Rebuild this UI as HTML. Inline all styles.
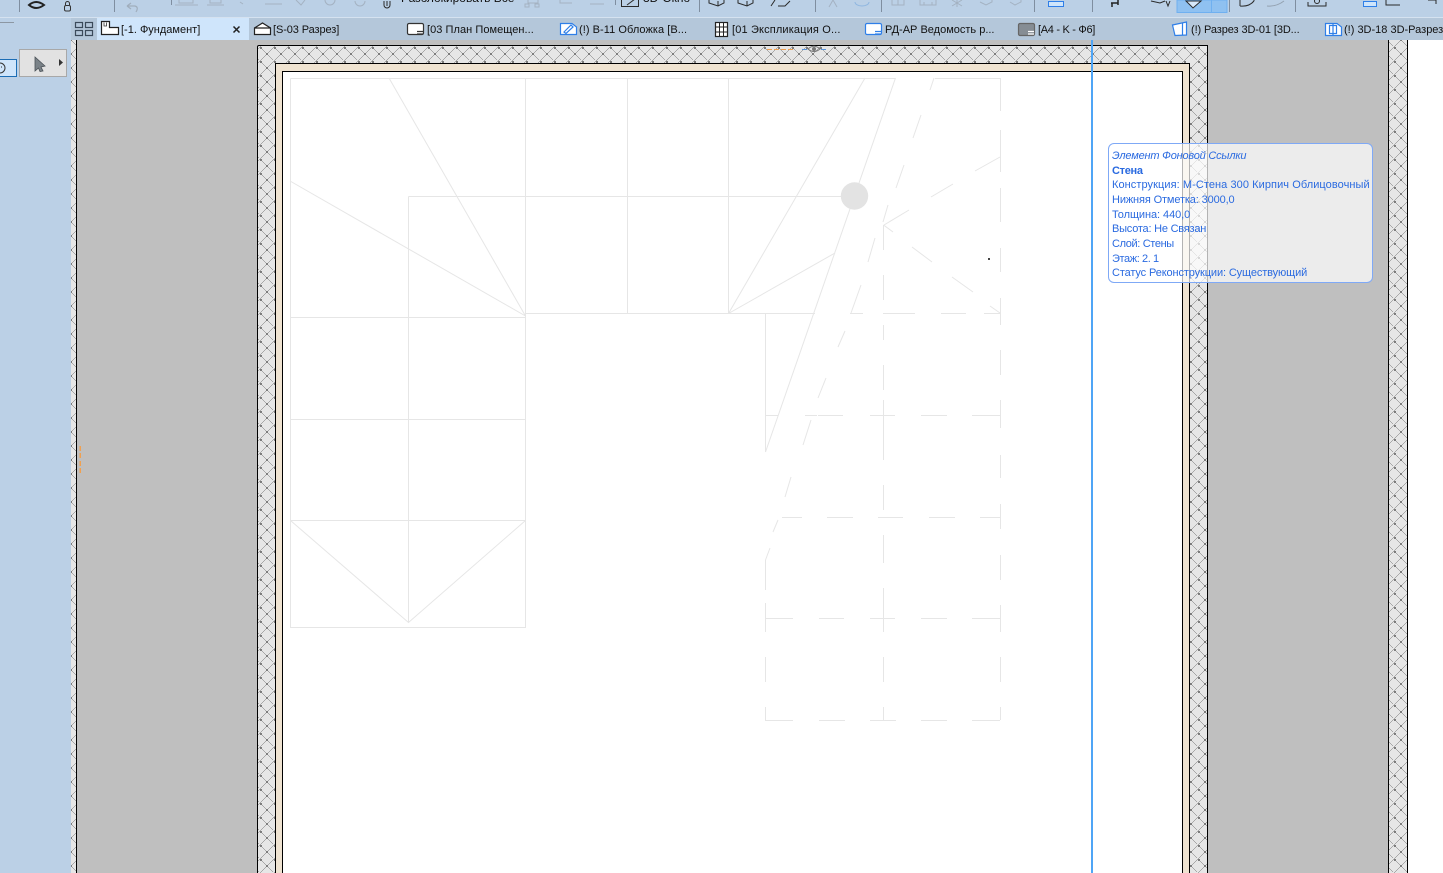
<!DOCTYPE html>
<html lang="ru">
<head>
<meta charset="utf-8">
<title>Фундамент</title>
<style>
html,body{margin:0;padding:0;background:#fff}
body{position:relative;width:1443px;height:873px;overflow:hidden;font-family:"Liberation Sans","Noto Sans CJK SC",sans-serif}
svg.bg{position:absolute;left:0;top:0}
.t{position:absolute;top:23px;font-size:11px;line-height:14px;color:#111;white-space:nowrap}
.tb{position:absolute;top:-8px;font-size:12px;line-height:12px;color:#111;white-space:nowrap}
#tip{position:absolute;left:1108px;top:143px;width:263px;height:138px;border:1px solid #7fa9f6;border-radius:6px;background:rgba(255,255,255,.7);color:#2a6ae0;font-size:11px}
#tip div{position:absolute;left:3px;white-space:nowrap;line-height:14px}
</style>
</head>
<body>
<svg class="bg" width="1443" height="873" viewBox="0 0 1443 873" xmlns="http://www.w3.org/2000/svg">
<defs>
<pattern id="h" width="14" height="14" patternUnits="userSpaceOnUse" x="260" y="47">
<rect width="14" height="14" fill="#e6e6e6"/>
<g fill="#a8a8a8" shape-rendering="crispEdges">
<rect x="0" y="0" width="2" height="2" fill="#7c7c7c"/><rect x="2" y="2" width="1" height="1"/><rect x="3" y="3" width="1" height="1"/><rect x="4" y="4" width="1" height="1"/><rect x="5" y="5" width="1" height="1"/>
<rect x="6" y="6" width="2" height="2" fill="#7c7c7c"/><rect x="8" y="8" width="1" height="1"/><rect x="9" y="9" width="1" height="1"/><rect x="10" y="10" width="1" height="1"/><rect x="11" y="11" width="1" height="1"/><rect x="12" y="12" width="1" height="1"/>
<rect x="13" y="0" width="1" height="1"/><rect x="12" y="1" width="1" height="1"/><rect x="11" y="2" width="1" height="1"/><rect x="10" y="3" width="1" height="1"/><rect x="9" y="4" width="1" height="1"/><rect x="8" y="5" width="1" height="1"/>
<rect x="5" y="8" width="1" height="1"/><rect x="4" y="9" width="1" height="1"/><rect x="3" y="10" width="1" height="1"/><rect x="2" y="11" width="1" height="1"/><rect x="1" y="12" width="1" height="1"/><rect x="0" y="13" width="1" height="1"/>
</g>
</pattern>
</defs>

<!-- toolbar -->
<rect x="0" y="0" width="1443" height="17" fill="#bbd0e6"/>
<rect x="0" y="17" width="1443" height="1" fill="#d5e2f0"/>
<rect x="1177" y="0" width="50" height="12.500" fill="#8fc1f1" stroke="#6fb0f0"/>
<line x1="1211.500" y1="0" x2="1211.500" y2="12" stroke="#6fb0f0"/>
<g stroke="#7f8ea0" stroke-width="1" shape-rendering="crispEdges">
<line x1="19.500" y1="0" x2="19.500" y2="12"/><line x1="114.500" y1="0" x2="114.500" y2="12"/><line x1="171.500" y1="0" x2="171.500" y2="5"/>
<line x1="615.500" y1="0" x2="615.500" y2="5"/><line x1="699.500" y1="0" x2="699.500" y2="12"/><line x1="815.500" y1="0" x2="815.500" y2="12"/>
<line x1="881.500" y1="0" x2="881.500" y2="12"/><line x1="1034.500" y1="0" x2="1034.500" y2="12"/><line x1="1092.500" y1="0" x2="1092.500" y2="12"/>
<line x1="1229.500" y1="0" x2="1229.500" y2="12"/><line x1="1295.500" y1="0" x2="1295.500" y2="12"/>
</g>
<path d="M29 5 Q36 -1 44 5 Q36 11 29 5Z" fill="none" stroke="#222" stroke-width="2"/>
<rect x="64.500" y="5.500" width="6" height="5.500" rx="1.500" fill="none" stroke="#333"/><path d="M65.500 5V3.500a2 2 0 0 1 4 0V5" fill="none" stroke="#333"/>
<path d="M127 6 L131 3 M127 6 L131 9 M127 6 H135 Q139 7 136 12" fill="none" stroke="#a0aebd" stroke-width="1.200"/>
<g fill="none" stroke="#a4b2c2" stroke-width="1">
<path d="M179 0V3H193V0M175 5H198"/><path d="M210 0V3H221V0M207 5H224"/><path d="M240 2L243 4"/><path d="M265 4H282"/>
<path d="M296 0L301 5L305 0M325 0a5 5 0 1 0 10 0"/><path d="M355 1a5 5 0 0 0 10 0"/>
<path d="M530 0V3H540V0M527 4h4v3h-4zM537 4h4v3h-4z" transform="translate(-2,0)"/>
<path d="M560 0V3H572M590 4h14"/>
<path d="M833 0L829 7M833 0L837 7"/><path d="M855 2a7 4 0 0 0 14 0" stroke="#8fb6e0"/>
<path d="M892 0V5H904V0M898 0V5"/><path d="M920 0V5H936V0M924 5V2M932 5V2"/><path d="M952 0L962 6M962 0L952 6M957 0V7"/>
<path d="M980 2L986 5L992 2V0M1010 2L1015 5L1021 2V0"/>
</g>
<g fill="none" stroke="#2a2a2a" stroke-width="1">
<path d="M384 1V5a3 3 0 0 0 6 0V1"/><line x1="387" y1="1" x2="387" y2="6"/>
<rect x="621.500" y="-6" width="17" height="12.500"/><path d="M627 5L635 -1"/>
<path d="M709 0V3L718 6L724 3V0M718 6V1"/><path d="M738 0V3L747 6L753 3V0M747 6V1"/><path d="M771 6L775 0M778 6H785L790 1"/>
<path d="M1111 3H1118M1112 3V7M1118 0V5" stroke="#222" stroke-width="1.500"/>
<path d="M1151 1L1160 3L1165 1M1166 1L1168 6L1170 1"/><path d="M1186 1L1194 6L1201 1"/>
<path d="M1240 6Q1249 7 1254 1M1240 6V0M1254 1V0"/><path d="M1308 2V6H1326V2"/><circle cx="1317" cy="1" r="2.500"/>
<path d="M1386 0V5H1400M1428 0H1436V4"/>
</g>
<path d="M1267 6Q1276 7 1284 1" fill="none" stroke="#93a1b0"/>
<g fill="none" stroke="#2f7fe8">
<rect x="1048.500" y="1.500" width="15" height="5" fill="#cfe5fb"/><rect x="1363.500" y="1.500" width="13" height="5" fill="#cfe5fb"/>
</g>
<path d="M1186 1H1201L1193 8Z" fill="#d6e8fa" stroke="#2a2a2a"/>

<!-- tab bar -->
<rect x="0" y="18" width="1443" height="22" fill="#b4c7da"/>
<rect x="0" y="18" width="71" height="22" fill="#bbd0e6"/>
<rect x="97" y="18" width="152" height="22" fill="#cfe5fb"/>
<rect x="0" y="40" width="71" height="833" fill="#bbd0e6"/>
<rect x="0" y="22" width="14" height="1" fill="#8c97a3"/>

<!-- gray field and hatch bands -->
<rect x="71" y="40" width="1372" height="5" fill="#bfbfbf"/>
<rect x="71" y="40" width="5" height="833" fill="url(#h)"/>
<rect x="76" y="40" width="1" height="833" fill="#000"/>
<rect x="77" y="40" width="1311" height="833" fill="#bfbfbf"/>
<rect x="1388" y="40" width="19" height="833" fill="url(#h)"/>
<rect x="1388" y="40" width="1" height="833" fill="#000"/>
<rect x="1407" y="40" width="1" height="833" fill="#000"/>
<rect x="1408" y="40" width="35" height="833" fill="#fff"/>

<!-- sheet -->
<rect x="258" y="46" width="949" height="827" fill="url(#h)"/>
<path d="M257.500 873V47Q257.500 45.500 259 45.500H1207.500V873" fill="none" stroke="#000" stroke-width="1"/>
<rect x="276" y="64" width="913" height="809" fill="#efe3d1"/>
<path d="M275.500 873V63.500H1189.500V873" fill="none" stroke="#000" stroke-width="1"/>
<rect x="283" y="72" width="899" height="801" fill="#fff"/>
<path d="M282.500 873V71.500H1182.500V873" fill="none" stroke="#000" stroke-width="1"/>

<!-- sidebar pieces -->
<rect x="19.500" y="49.500" width="47" height="27" fill="#e2e2e2" stroke="#a8a8a8"/>
<path d="M35 57L45 66L41 67L43 71L40 71.500L38.500 68L35 71Z" fill="#7a8288" stroke="#4a5157" stroke-width=".8"/>
<path d="M59 59L63 62.500L59 66Z" fill="#333"/>
<rect x="-2" y="59.500" width="18.500" height="17" fill="#cfe5fb" stroke="#1b6db5"/>
<path d="M0 63a5 5 0 0 1 0 10M1 67h1" fill="none" stroke="#333"/>

<!-- orange/blue ticks -->
<g fill="#f0a050" shape-rendering="crispEdges">
<rect x="79.500" y="446" width="1.500" height="5"/><rect x="79.500" y="453" width="1.500" height="5"/><rect x="79.500" y="461" width="1.500" height="5"/><rect x="79.500" y="468" width="1.500" height="5"/>
<rect x="767" y="49" width="5" height="1"/><rect x="774" y="49" width="5" height="1"/><rect x="781" y="49" width="5" height="1"/><rect x="788" y="49" width="5" height="1"/>
</g>
<g fill="#5a94dc" shape-rendering="crispEdges"><rect x="802" y="49" width="5" height="1"/><rect x="821" y="49" width="5" height="1"/></g>
<path d="M808 49Q814 43.500 820 49Q814 54 808 49Z" fill="none" stroke="#777"/><circle cx="814" cy="49" r="2" fill="#777"/>

<!-- floor-plan ghost lines -->
<g fill="none" stroke="#e6e6e6" stroke-width="1">
<g shape-rendering="crispEdges">
<path d="M290.500 78.500H895.500M935 78.500H1000.500M290.500 78.500V627.500H525.500V78.500M627.500 78.500V313.500M728.500 78.500V313.500M525 313.500H815M408.500 196.500H842M408.500 196.500V622M290 317.500H525M290 419.500H525M290 520.500H525M765.500 313.500V452"/>
<path d="M765 415.500H778M805 415.500H817M818 415.500H843M870 415.500H895M921 415.500H947M972 415.500H1000"/>
<path d="M782 517.500H802M827 517.500H853M878 517.500H903M929 517.500H955M980 517.500H1000"/>
<path d="M765 618.500H793M819 618.500H844M870 618.500H895M921 618.500H947M972 618.500H1000"/>
<path d="M765 720.500H793M819 720.500H845M870 720.500H896M921 720.500H947M972 720.500H1000"/>
<path d="M850 313.500H863M883 313.500H915M941 313.500H966M984 313.500H1000"/>
<path d="M765.500 560V590M765.500 603V632M765.500 657V682M765.500 707V720"/>
<path d="M883.500 225V250M883.500 275V300M883.500 325V340M883.500 365V390M883.500 400V460M883.500 485V510M883.500 535V563M883.500 588V632M883.500 657V682M883.500 707V720"/>
<path d="M1000.500 78V111M1000.500 130V172M1000.500 188V222M1000.500 248V272M1000.500 298V325M1000.500 350V375M1000.500 400V428M1000.500 455V478M1000.500 504V529M1000.500 555V580M1000.500 605V632M1000.500 657V682M1000.500 707V720"/>
</g>
<path d="M389 78L525.500 316M290 181L525.500 316M290.500 520.500L408.500 622.500L525.500 520.500"/>
<path d="M865 78L728.500 313.500M835 253L728.500 313.500"/>
<path d="M895.500 78L765.500 452"/>
<path d="M934 78L930 90M921 115L913 138M904 165L896 188M888 205L883 222M875 238L868 262M861 285L851 313M845 331L838 347M826 378L818 398M811 420L803 445M791 477L785 497M778 520L773 532M770 548L765.500 560"/>
<path d="M1000 157L975 171M953 184L931 197M909 210L884 225"/>
<path d="M883.500 225L893 232M912 247L932 262M952 277L973 292M990 306L1000 313"/>
</g>
<circle cx="854.500" cy="196" r="13.700" fill="#e3e3e3"/>
<rect x="988" y="258" width="2" height="2" fill="#444"/>

<!-- cursor line -->
<rect x="1091" y="40" width="2" height="833" fill="#4fa5f6"/>

<!-- tab icons -->
<g fill="none" stroke-width="1.200">
<rect x="75.500" y="22.500" width="7" height="5" stroke="#3b4a5a"/><rect x="85.500" y="22.500" width="7" height="5" stroke="#3b4a5a"/><rect x="75.500" y="30.500" width="7" height="5" stroke="#3b4a5a"/><rect x="85.500" y="30.500" width="7" height="5" stroke="#3b4a5a"/>
<path d="M101.500 21.500H109.500V27.500H118.500V34.500H101.500Z" fill="#fff" stroke="#222"/><path d="M104 22.500V26H106.500V22.500" stroke="#333" stroke-width=".8"/>
<path d="M254.500 28L262.500 23L270.500 28V34.500H254.500Z" fill="#fff" stroke="#222"/><line x1="254" y1="28" x2="271" y2="28" stroke="#222"/>
<rect x="407.500" y="23.500" width="16" height="11" rx="1.500" fill="#fff" stroke="#333"/><path d="M417 31.500H423.500M417 34H423.500" stroke="#333"/>
<path d="M560.500 23.500H572L576.500 27V34.500H560.500Z" fill="#fff" stroke="#2f7fe8"/><path d="M564 32L571 25L573 27L566 33.500Z" stroke="#2f7fe8"/>
<rect x="715.500" y="22.500" width="12" height="14" fill="#fff" stroke="#222"/><path d="M719.500 22V37M723.500 22V37M715 27H728M715 32H728" stroke="#222" stroke-width="1"/>
<rect x="865.500" y="23.500" width="16" height="11" rx="1.500" fill="#fff" stroke="#2f7fe8"/><path d="M875 31.500H881.500M875 34H881.500" stroke="#2f7fe8"/>
<rect x="1018.500" y="23.500" width="16" height="12" rx="1.500" fill="#868d94" stroke="#666"/><path d="M1028 31.500H1034M1028 34H1034" stroke="#fff"/>
<path d="M1172.500 25L1186.500 22V35L1175 35.500Z" fill="#fff" stroke="#2f7fe8"/><line x1="1182.500" y1="23" x2="1182.500" y2="35" stroke="#2f7fe8"/>
<path d="M1325.500 23.500H1337L1341.500 27V35.500H1325.500Z" fill="#fff" stroke="#2f7fe8"/><rect x="1329.500" y="25.500" width="7" height="8" stroke="#2f7fe8"/><line x1="1333" y1="24" x2="1333" y2="35" stroke="#2f7fe8"/>
<path d="M233.500 26.500L239.500 32.500M239.500 26.500L233.500 32.500" stroke="#222" stroke-width="1.500"/>
</g>
</svg>

<div class="tb" style="left:401px">Разблокировать Все</div>
<div class="tb" style="left:643px">3D-Окно</div>

<div class="t" style="left:121px">[-1. Фундамент]</div>
<div class="t" style="left:273px;letter-spacing:-.1px">[S-03 Разрез]</div>
<div class="t" style="left:427px;letter-spacing:.05px">[03 План Помещен...</div>
<div class="t" style="left:579px;letter-spacing:.05px">(!) В-11 Обложка [В...</div>
<div class="t" style="left:732px;letter-spacing:.15px">[01 Экспликация О...</div>
<div class="t" style="left:885px">РД-АР Ведомость р...</div>
<div class="t" style="left:1038px;letter-spacing:-.3px">[A4 - K - Ф6]</div>
<div class="t" style="left:1191px;letter-spacing:-.1px">(!) Разрез 3D-01 [3D...</div>
<div class="t" style="left:1344px">(!) 3D-18 3D-Разрез</div>

<div id="tip">
<div style="top:5px;font-style:italic;letter-spacing:-.2px">Элемент Фоновой Ссылки</div>
<div style="top:20px;font-weight:bold;letter-spacing:-.3px">Стена</div>
<div style="top:34px;letter-spacing:.07px">Конструкция: М-Стена 300 Кирпич Облицовочный</div>
<div style="top:49px;letter-spacing:-.13px">Нижняя Отметка: 3000,0</div>
<div style="top:64px;letter-spacing:-.07px">Толщина: 440,0</div>
<div style="top:78px;letter-spacing:-.22px">Высота: Не Связан</div>
<div style="top:93px;letter-spacing:-.36px">Слой: Стены</div>
<div style="top:108px;letter-spacing:-.4px">Этаж: 2. 1</div>
<div style="top:122px;letter-spacing:-.12px">Статус Реконструкции: Существующий</div>
</div>
</body>
</html>
